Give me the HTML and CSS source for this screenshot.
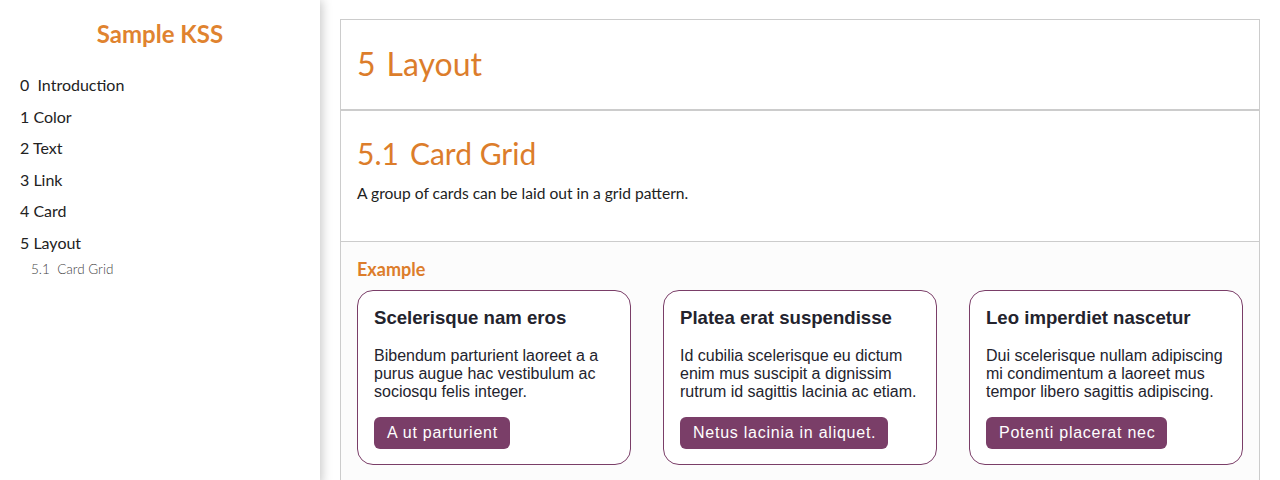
FILE: index.html
```html
<!DOCTYPE html>
<html lang="en">
<head>
<meta charset="utf-8">
<title>Sample KSS</title>
<link rel="stylesheet" href="styles.css">
</head>
<body>
<div class="page">
  <aside class="sidebar">
    <h1 class="brand">Sample KSS</h1>
    <nav class="nav">
      <a class="nav-item">0&nbsp; Introduction</a>
      <a class="nav-item">1 Color</a>
      <a class="nav-item">2 Text</a>
      <a class="nav-item">3 Link</a>
      <a class="nav-item">4 Card</a>
      <a class="nav-item">5 Layout</a>
      <a class="nav-sub">5.1&nbsp; Card Grid</a>
    </nav>
  </aside>
  <main class="main">
    <div class="doc">
      <header class="doc-head">
        <h2 class="doc-title"><span class="num">5</span>Layout</h2>
      </header>
      <section class="section">
        <h3 class="section-title"><span class="num">5.1</span>Card Grid</h3>
        <p class="section-desc">A group of cards can be laid out in a grid pattern.</p>
      </section>
      <section class="example">
        <h4 class="example-label">Example</h4>
        <div class="card-grid">
          <div class="card">
            <h5 class="card-title">Scelerisque nam eros</h5>
            <p class="card-text">Bibendum parturient laoreet a a purus augue hac vestibulum ac sociosqu felis integer.</p>
            <a class="card-btn">A ut parturient</a>
          </div>
          <div class="card">
            <h5 class="card-title">Platea erat suspendisse</h5>
            <p class="card-text">Id cubilia scelerisque eu dictum enim mus suscipit a dignissim rutrum id sagittis lacinia ac etiam.</p>
            <a class="card-btn">Netus lacinia in aliquet.</a>
          </div>
          <div class="card">
            <h5 class="card-title">Leo imperdiet nascetur</h5>
            <p class="card-text">Dui scelerisque nullam adipiscing mi condimentum a laoreet mus tempor libero sagittis adipiscing.</p>
            <a class="card-btn">Potenti placerat nec</a>
          </div>
        </div>
      </section>
    </div>
  </main>
</div>
</body>
</html>
```

FILE: styles.css
```css
* { box-sizing: border-box; }
html, body { margin: 0; padding: 0; background: #fff; }
body { font-family: Lato, "Liberation Sans", sans-serif; color: #222; }

.page { display: flex; min-height: 480px; }

.sidebar {
  width: 320px;
  flex: none;
  background: #fff;
  box-shadow: 2px 0 10px rgba(0,0,0,0.22);
  padding: 19px 20px;
  position: relative;
  z-index: 1;
}
.brand {
  margin: 0 0 26px;
  text-align: center;
  font-size: 24px;
  font-weight: 700;
  color: #e0832f;
  line-height: 30px;
}
.nav { display: flex; flex-direction: column; }
.nav-item {
  font-size: 16px;
  color: #222;
  line-height: 20px;
  margin-bottom: 11.6px;
}
.nav-sub {
  font-size: 13.5px;
  font-weight: 300;
  color: #444;
  padding-left: 11px;
  margin-top: -5px;
  line-height: 18px;
}

.main { flex: 1; padding: 19px 20px 0 20px; }
.doc { border: 1px solid #ccc; border-bottom: none; }

.doc-head {
  height: 91px;
  border-bottom: 2px solid #ccc;
  padding: 0 16px 2px;
  display: flex;
  align-items: center;
}
.doc-title, .section-title {
  margin: 0;
  font-weight: 400;
  color: #dc7d2b;
}
.doc-title { font-size: 32px; }
.section-title { font-size: 30px; line-height: 40px; }
.num { margin-right: 11px; }

.section {
  height: 131px;
  border-bottom: 1px solid #ccc;
  padding: 22px 16px 0;
}
.section-desc {
  margin: 11px 0 0;
  font-size: 15.6px;
  color: #222;
}

.example { background: #fcfcfc; padding: 16px 16px 20px; }
.example-label {
  margin: 0 0 10px;
  font-size: 18px;
  font-weight: 700;
  color: #dc7d2b;
  line-height: 22px;
}
.card-grid {
  display: grid;
  grid-template-columns: repeat(3, 1fr);
  gap: 32px;
}
.card {
  background: #fff;
  border: 1px solid #7a3e68;
  border-radius: 16px;
  padding: 16px 16px 15px;
  font-family: "Liberation Sans", Arial, sans-serif;
  color: #23232d;
}
.card-title {
  margin: 0 0 18px;
  font-size: 18.6px;
  font-weight: 700;
  line-height: 22px;
}
.card-text {
  margin: 0 0 16px;
  font-size: 16px;
  line-height: 18px;
}
.card-btn {
  display: inline-block;
  background: #7a3e68;
  color: #fff;
  font-size: 16px;
  letter-spacing: 0.75px;
  line-height: 32px;
  padding: 0 12px 0 13px;
  border-radius: 6px;
}
```
